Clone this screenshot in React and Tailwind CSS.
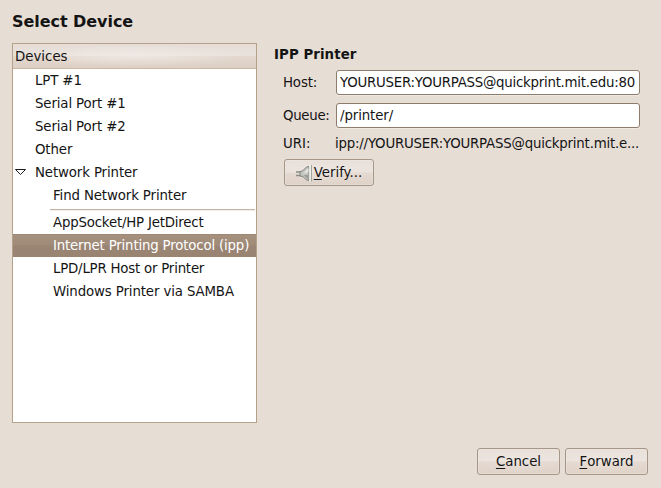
const text = "font-['DejaVu_Sans','Liberation_Sans',sans-serif] text-[13.33px] text-[#141414]";

function Button({ children, className = "" }) {
  return (
    <button
      className={`flex h-[27px] items-center justify-center whitespace-nowrap rounded-[3px] border border-[#a69789] bg-[radial-gradient(ellipse_at_center,#f2ede966_0%,#f2ede900_65%),linear-gradient(to_bottom,#e9e0da_0%,#ebe3dd_48%,#e4d9d1_52%,#dfd2c8_100%)] shadow-[inset_0_0_0_1px_#f0e9e466] ${className}`}
    >
      {children}
    </button>
  );
}

function Row({ children, nested = false, selected = false, open = false, tracking = "tracking-[-0.12px]" }) {
  return (
    <li
      className={`flex h-[23px] items-center whitespace-nowrap ${
        selected
          ? "bg-[linear-gradient(to_bottom,#947f6e_0px,#a6917f_1px,#a08b79_11px,#9a8473_12px,#998371_23px)] text-white"
          : ""
      }`}
    >
      <span className={`flex shrink-0 items-center ${nested ? "w-10" : "w-[22px]"}`}>
        {open && (
          <svg className="mb-0.5 ml-px" width="13" height="8" viewBox="0 0 13 8">
            <path d="M1.500 1.500H11.500L6.500 6.500Z" fill="#fff" stroke="#1a1a1a" />
          </svg>
        )}
      </span>
      <span className={tracking}>{children}</span>
    </li>
  );
}

function Plug() {
  return (
    <svg width="17" height="18" viewBox="0 0 17 18">
      <path d="M0 8H5M0 11.500H5" stroke="#8b8d88" strokeWidth="1.3" />
      <path
        d="M4 7.500Q7 7.500 8.500 5Q10 2.500 13 2.500V16.500Q10 16.500 8.500 14Q7 12 4 12Z"
        fill="#c3c5c1"
        stroke="#80827d"
      />
      <path d="M6 9.500Q9 9 10 6.500Q11 4.500 12.500 4.500V8Q10 9.500 6 9.500Z" fill="#e1e3df" />
      <path d="M7.500 11H12.500V15Q10.500 14.500 9.500 13Q8.500 11.500 7.500 11Z" fill="#9b9d98" />
      <path d="M14 1V17.500" stroke="#f0f1ee" strokeWidth="1.5" />
      <path d="M15.500 1V17.500" stroke="#a2a59e" />
    </svg>
  );
}

const field =
  "h-[25px] w-[304px] shrink-0 rounded-[3px] border border-[#8d7b6b] bg-white pl-[3px] outline-none shadow-[0_1px_0_#efe9e3]";

export default function App() {
  return (
    <main className={`flex h-[488px] w-[661px] flex-col overflow-hidden bg-[#e6ddd4] px-3 pt-3 ${text}`}>
      <h1 className="h-[31px] text-[16px] font-bold leading-[19px] tracking-[-0.05px] whitespace-nowrap">Select Device</h1>
      <div className="flex h-[380px]">
        <section className="w-[245px] border border-[#b5a08a] bg-white">
          <div className="flex h-[25px] items-center border-b border-[#cdb9aa] bg-[radial-gradient(ellipse_at_center,#f4f0ec99_0%,#f4f0ec00_65%),linear-gradient(to_bottom,#e6ddd7_0%,#e9e1db_48%,#e3d8cf_52%,#ddcfc4_100%)] pt-0.5 pl-0.5">
            Devices
          </div>
          <ul>
            <Row>LPT #1</Row>
            <Row>Serial Port #1</Row>
            <Row>Serial Port #2</Row>
            <Row>Other</Row>
            <Row open>Network Printer</Row>
            <Row nested>Find Network Printer</Row>
            <li className="flex h-1 items-end pl-[37px] pr-px">
              <div className="h-0.5 w-full border-t border-[#c5b4a5] bg-[#f3eeea]" />
            </li>
            <Row nested tracking="tracking-[-0.19px]">AppSocket/HP JetDirect</Row>
            <Row nested selected tracking="tracking-[-0.17px]">Internet Printing Protocol (ipp)</Row>
            <Row nested tracking="tracking-[-0.21px]">LPD/LPR Host or Printer</Row>
            <Row nested>Windows Printer via SAMBA</Row>
          </ul>
        </section>
        <section className="ml-[17px] w-[370px]">
          <h2 className="h-[27px] pt-0.5 font-bold leading-5 tracking-[0.08px] whitespace-nowrap">IPP Printer</h2>
          <div className="ml-[9px]">
            <label className="flex h-[25px] items-center">
              <span className="w-[53px] tracking-[-0.15px]">Host:</span>
              <input className={`${field} tracking-[-0.24px]`} defaultValue="YOURUSER:YOURPASS@quickprint.mit.edu:80" />
            </label>
            <label className="mt-2 flex h-[25px] items-center">
              <span className="w-[53px] tracking-[-0.3px]">Queue:</span>
              <input className={`${field} tracking-[-0.1px]`} defaultValue="/printer/" />
            </label>
            <div className="mt-[6px] flex h-5 items-center whitespace-nowrap">
              <span className="w-[52px] shrink-0">URI:</span>
              <span className="tracking-[-0.2px]">ipp://YOURUSER:YOURPASS@quickprint.mit.e...</span>
            </div>
            <Button className="ml-px mt-[5px] w-[90px]">
              <Plug />
              <span className="ml-px"><u className="underline-offset-2">V</u>erify...</span>
            </Button>
          </div>
        </section>
      </div>
      <footer className="mt-[25px] flex justify-end gap-[5px] pr-px">
        <Button className="w-[83px]"><u className="underline-offset-2">C</u>ancel</Button>
        <Button className="w-[83px]"><u className="underline-offset-2">F</u>orward</Button>
      </footer>
    </main>
  );
}
